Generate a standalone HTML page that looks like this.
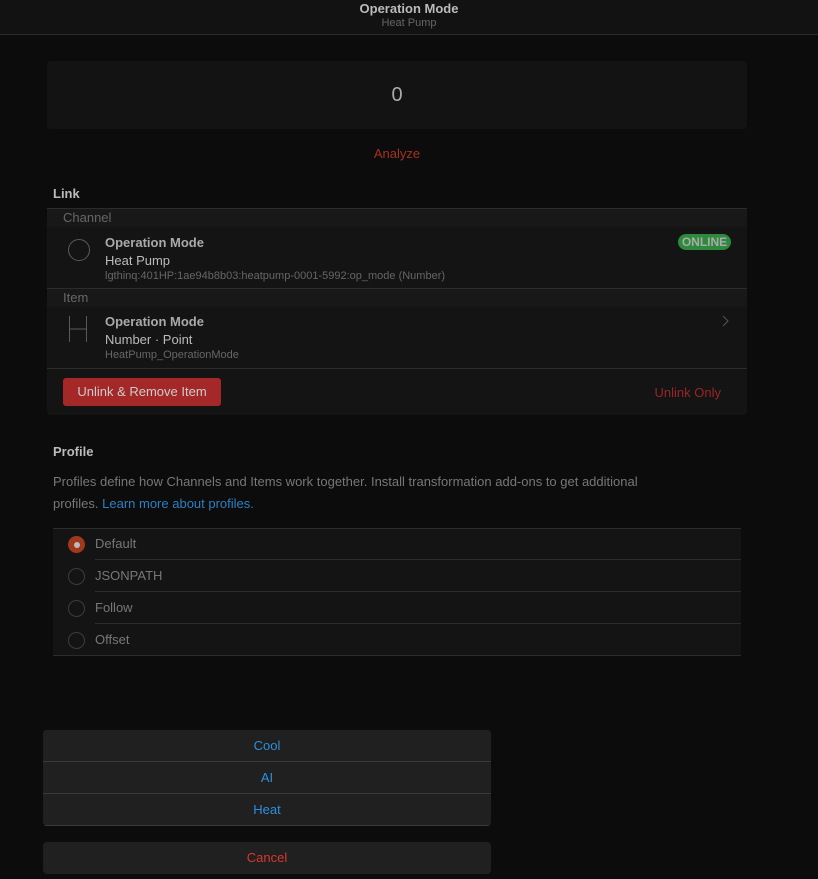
<!DOCTYPE html>
<html><head><meta charset="utf-8"><style>
*{box-sizing:border-box;margin:0;padding:0}
body{width:818px;height:879px;background:#0c0c0c;font-family:"Liberation Sans",sans-serif;color:#ccc;position:relative;overflow:hidden;font-size:13px}
.abs{position:absolute}
.hdr{left:0;top:0;width:818px;height:35px;background:#121212;border-bottom:1px solid #2a2a2a;text-align:center}
.card{background:#141414;border-radius:4px}
.row{position:absolute;left:0;right:0}
.sep{position:absolute;height:1px;background:#2c2c2c}
.radio{position:absolute;left:68px;width:17px;height:17px;border:1px solid #3c3c3c;border-radius:50%}
.rl{position:absolute;left:95px;color:#777;font-size:13px}
.sheet{background:#202020;text-align:center;color:#2d8fdc;font-size:13px}
</style></head><body>
<div class="abs hdr"><div style="font-weight:bold;font-size:13px;color:#bbb;padding-top:1px">Operation Mode</div><div style="font-size:11px;color:#666;margin-top:1px">Heat Pump</div></div>
<div class="abs card" style="left:47px;top:61px;width:700px;height:68px;background:#131313"><div style="text-align:center;font-size:20px;color:#aaa;line-height:68px">0</div></div>
<div class="abs" style="left:0;width:794px;top:146px;text-align:center;color:#a3321f;font-size:13px">Analyze</div>
<div class="abs" style="left:53px;top:186px;font-weight:bold;color:#bbb">Link</div>
<div class="abs" style="left:47px;top:208px;width:700px;height:207px;background:#141414;border-radius:0 0 4px 4px;border-top:1px solid #2c2c2c">
 <div class="row" style="top:0;height:18px;background:#181818;color:#666;padding-left:16px;font-size:13px;line-height:18px">Channel</div>
 <div class="abs" style="left:21px;top:30px;width:22px;height:22px;border:1px solid #5a5a5a;border-radius:50%"></div>
 <div class="abs" style="left:58px;top:26px;font-weight:bold;color:#aaa">Operation Mode</div>
 <div class="abs" style="left:58px;top:44px;color:#bbb">Heat Pump</div>
 <div class="abs" style="left:58px;top:61px;color:#666;font-size:11px">lgthinq:401HP:1ae94b8b03:heatpump-0001-5992:op_mode (Number)</div>
 <div class="abs" style="left:631px;top:25px;width:53px;height:16px;background:#2d8a3c;border-radius:8px;color:#aaa;font-weight:bold;font-size:12px;text-align:center;line-height:16px">ONLINE</div>
 <div class="sep" style="left:0;right:0;top:79px"></div>
 <div class="row" style="top:80px;height:18px;background:#181818;color:#666;padding-left:16px;line-height:18px">Item</div>
 <svg class="abs" style="left:20px;top:106px" width="22" height="28"><path d="M2.5 1V27M19.5 1V27M2.5 14H19.5" stroke="#5a5a5a" stroke-width="1" fill="none"/></svg>
 <div class="abs" style="left:58px;top:105px;font-weight:bold;color:#aaa">Operation Mode</div>
 <div class="abs" style="left:58px;top:123px;color:#bbb">Number · Point</div>
 <div class="abs" style="left:58px;top:140px;color:#666;font-size:11px">HeatPump_OperationMode</div>
 <svg class="abs" style="left:675px;top:106px" width="8" height="12"><path d="M1 1L6 6L1 11" stroke="#555" fill="none"/></svg>
 <div class="sep" style="left:0;right:0;top:159px"></div>
 <div class="abs" style="left:16px;top:169px;width:158px;height:28px;background:#a42828;border-radius:3px;color:#ccc;text-align:center;line-height:28px">Unlink &amp; Remove Item</div>
 <div class="abs" style="left:602px;top:176px;width:72px;text-align:right;color:#9a2525">Unlink Only</div>
</div>
<div class="abs" style="left:53px;top:444px;font-weight:bold;color:#bbb">Profile</div>
<div class="abs" style="left:53px;top:471px;width:610px;color:#777;line-height:22px">Profiles define how Channels and Items work together. Install transformation add-ons to get additional profiles. <span style="color:#2d7fc4">Learn more about profiles.</span></div>
<div class="abs" style="left:53px;top:528px;width:688px;height:128px;background:#141414;border-top:1px solid #2c2c2c;border-bottom:1px solid #2c2c2c"></div>
<div class="sep" style="left:95px;width:646px;top:559px"></div>
<div class="sep" style="left:95px;width:646px;top:591px"></div>
<div class="sep" style="left:95px;width:646px;top:623px"></div>
<div class="radio" style="top:536px;background:#a0381c;border-color:#a0381c"><div style="width:6px;height:6px;border-radius:50%;background:#bbb;margin:4.5px"></div></div>
<div class="radio" style="top:568px"></div><div class="radio" style="top:600px"></div><div class="radio" style="top:632px"></div>
<div class="rl" style="top:536px">Default</div><div class="rl" style="top:568px">JSONPATH</div><div class="rl" style="top:600px">Follow</div><div class="rl" style="top:632px">Offset</div>
<div class="abs" style="left:43px;top:730px;width:448px;height:96px;background:#202020;border-radius:4px;overflow:hidden">
 <div class="sheet" style="height:32px;line-height:32px;border-bottom:1px solid #3a3a3a">Cool</div>
 <div class="sheet" style="height:32px;line-height:32px;border-bottom:1px solid #3a3a3a">AI</div>
 <div class="sheet" style="height:32px;line-height:32px;border-bottom:1px solid #3a3a3a">Heat</div>
</div>
<div class="abs sheet" style="left:43px;top:842px;width:448px;height:32px;line-height:32px;border-radius:4px;color:#d9372c">Cancel</div>
</body></html>
